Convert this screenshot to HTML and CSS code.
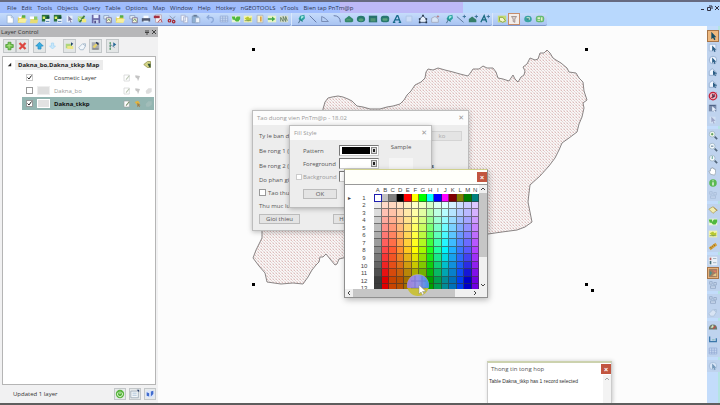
FILE: index.html
```html
<!DOCTYPE html>
<html lang="vi">
<head>
<meta charset="utf-8">
<title>Map workspace</title>
<link rel="stylesheet" href="styles.css">
</head>
<body>
<svg class="defs" aria-hidden="true">
  <symbol id="new" viewBox="0 0 12 12"><path d="M2.500 1.500h5l2.500 2.500v7h-7.500z" fill="#fff" stroke="#9ab4d6"/><path d="M7.500 1.500v3h2.500" fill="none" stroke="#9ab4d6"/></symbol>
  <symbol id="open" viewBox="0 0 12 12"><path d="M1 4h4l1-1.500h4v8H1z" fill="#e5d65c"/><path d="M1 10l2-4h9l-2 4.500z" fill="#f7ef9c"/><path d="M6 1.500h4v3H6z" fill="#55ad4a"/><path d="M2 3h3v2H2z" fill="#fff"/></symbol>
  <symbol id="openw" viewBox="0 0 12 12"><path d="M1 3h5v3H1z" fill="#fff"/><path d="M2 6h9l-1 5H1z" fill="#e8dc72"/><path d="M6 3h4v4H6z" fill="#8fca68"/></symbol>
  <symbol id="dbmap" viewBox="0 0 12 12"><path d="M1 1h9v8H1z" fill="#28713c"/><path d="M2 3h3v3H2z" fill="#d9ea68"/><path d="M5 6h6v5H5z" fill="#dfeaf4"/><path d="M7 3h3v2H7z" fill="#153f42"/><path d="M6 9h4" stroke="#4f7db4"/></symbol>
  <symbol id="arrow" viewBox="0 0 12 12"><path d="M2 2h7v8H2z" fill="#e6effb"/><path d="M4 2l5 5-2.500.2L8 10l-1.200.5-1.200-3L4 9z" fill="#7d779e"/></symbol>
  <symbol id="wand" viewBox="0 0 12 12"><path d="M1 3h8v6H1z" fill="#a9d56a"/><path d="M3 10l6-8" stroke="#437d42" stroke-width="2"/><path d="M6 6h5v4H6z" fill="#f3ea7d"/><path d="M2 4l3 3" stroke="#fff"/></symbol>
  <symbol id="save" viewBox="0 0 12 12"><path d="M1 1h10v10H1z" fill="#6967a6"/><path d="M3 1h6v4H3z" fill="#e8efff"/><path d="M3 7h6v4H3z" fill="#c8d3ed"/><path d="M4 8h2v3H4z" fill="#504d89"/></symbol>
  <symbol id="layers" viewBox="0 0 12 12"><path d="M1 2h6v4H1z" fill="#e9f3f8" stroke="#869abf"/><path d="M4 4.500h6v6H4z" fill="#f5f3d6" stroke="#766c91"/><path d="M5 8l2-2 2 3" fill="none" stroke="#528951"/></symbol>
  <symbol id="print" viewBox="0 0 12 12"><path d="M3 2h6v4H3z" fill="#f8fbff"/><path d="M1 5h10v4H1z" fill="#525a70"/><path d="M3 8h6v2H3z" fill="#dce8f8"/></symbol>
  <symbol id="pdf" viewBox="0 0 12 12"><path d="M3 1h7v9H3z" fill="#f1f1f5" stroke="#b9a5b1"/><path d="M1 2h7v3H1z" fill="#a52f40"/><path d="M6 10l3-4 2 4" fill="none" stroke="#bc3945"/></symbol>
  <symbol id="cut" viewBox="0 0 12 12"><path d="M3 2l6 6M10 3L4 8" stroke="#8593ad"/><circle cx="3" cy="8" r="1.500" fill="none" stroke="#a82831" stroke-width="1.500"/><circle cx="8" cy="9" r="1.500" fill="none" stroke="#a82831" stroke-width="1.500"/></symbol>
  <symbol id="copy" viewBox="0 0 12 12"><path d="M2.500 1.500h5v7h-5zM5.500 3.500h5v7h-5z" fill="#f3f7fd" stroke="#a7b1cf"/></symbol>
  <symbol id="paste" viewBox="0 0 12 12"><path d="M1.500 2.500h7v8h-7z" fill="#8eb0d2" stroke="#8098bc"/><path d="M5.500 4.500h5v6h-5z" fill="#eef5fd" stroke="#96a9c5"/><path d="M3 1h4v2H3z" fill="#667a94"/></symbol>
  <symbol id="undo" viewBox="0 0 12 12"><path d="M3 4h4q3 0 3 3t-3 3M5 1.500L2.500 4 5 6.500" fill="none" stroke="#8ba8d8" stroke-width="1.500"/></symbol>
  <symbol id="grid" viewBox="0 0 12 12"><path d="M1.500 2.500h9v7h-9zM1.500 5h9M1.500 7.500h9M4.500 2.500v7M7.500 2.500v7" fill="#d7e5fa" stroke="#92aad4"/></symbol>
  <symbol id="greenmap" viewBox="0 0 12 12"><path d="M1 2h10v8H1z" fill="#e9f6d6"/><path d="M1 3h4v3l2-3h4v3l-2 3H6L4 7H2z" fill="#4eb83e"/></symbol>
  <symbol id="yellowmap" viewBox="0 0 12 12"><path d="M1 2h10v8H1z" fill="#f3f3b1"/><path d="M2 5l4-2 2 2 2-1v3L6 9z" fill="#b7c832"/><path d="M2 8h8" stroke="#769957"/></symbol>
  <symbol id="chart" viewBox="0 0 12 12"><path d="M2.500 1.500h7v9h-7z" fill="#f6f1cf" stroke="#a6b0bd"/><path d="M6 3h2v6H6z" fill="#dba344"/></symbol>
  <symbol id="gomap" viewBox="0 0 12 12"><path d="M1 2h10v8H1z" fill="#e7f4c6"/><path d="M1 5h5V3l4 3-4 3V7H1z" fill="#43a74c"/></symbol>
  <symbol id="district" viewBox="0 0 12 12"><path d="M1 2h10v8H1z" fill="#d8dfcd"/><path d="M2 9V4l3 5V3l3 6V3l2 5" fill="none" stroke="#5d7a5f"/></symbol>
  <symbol id="pin" viewBox="0 0 12 12"><path d="M3 11l2-4" stroke="#385e77"/><path d="M5 2l5-1 .8 4L7 9 3 6z" fill="#2ca1a0"/><path d="M6 3l3-1v2L6 6z" fill="#a3eee2"/><path d="M4 6l4 3" stroke="#207676"/></symbol>
  <symbol id="line" viewBox="0 0 12 12"><path d="M2 2l8 8" stroke="#586b99"/></symbol>
  <symbol id="polyline" viewBox="0 0 12 12"><path d="M2 9V3l4 2 4 4H2" fill="none" stroke="#6e81aa"/></symbol>
  <symbol id="arc" viewBox="0 0 12 12"><path d="M2 2q8 0 8 8" fill="none" stroke="#586b99"/></symbol>
  <symbol id="poly" viewBox="0 0 12 12"><path d="M1 9V6l5-4 5 4v3l-2 1H2z" fill="#34886b"/><path d="M3 6h5v2H3z" fill="#529977"/></symbol>
  <symbol id="ellipse" viewBox="0 0 12 12"><ellipse cx="6" cy="6" rx="5" ry="4" fill="#27796d"/><ellipse cx="6" cy="7" rx="3" ry="2" fill="#55a079"/></symbol>
  <symbol id="rect" viewBox="0 0 12 12"><path d="M1 2h10v8H1z" fill="#28726c"/><path d="M3 5h6v4H3z" fill="#4f9574"/></symbol>
  <symbol id="rrect" viewBox="0 0 12 12"><rect x="1" y="2" width="10" height="8" rx="3" fill="#28786f"/><rect x="3" y="5" width="6" height="3" rx="1" fill="#5aa57e"/></symbol>
  <symbol id="text" viewBox="0 0 12 12"><path d="M2 10L6 2h1l3 8M4 7h5M1 10h3M8 10h3" fill="none" stroke="#176a8a" stroke-width="1.500"/></symbol>
  <symbol id="frame" viewBox="0 0 12 12"><path d="M2.500 2.500h7v7h-7z" fill="#cbdcf7" stroke="#adc3e5"/></symbol>
  <symbol id="reshape" viewBox="0 0 12 12"><path d="M2 10V6l4-4 4 4v4z" fill="#e5effc" stroke="#31435d"/><path d="M1 5h2v2H1zM5 1h2v2H5zM9 5h2v2H9zM1 9h2v2H1zM9 9h2v2H9z" fill="#233246"/></symbol>
  <symbol id="addnode" viewBox="0 0 12 12"><path d="M2 10V5l4-2 4 3v4z" fill="#d7e4f6" stroke="#a3a9bd"/><path d="M8 3h3M9.500 1.500v3" stroke="#b47c86"/></symbol>
  <symbol id="lineplus" viewBox="0 0 12 12"><path d="M1 3l8 7" stroke="#4d6a8b"/><path d="M8 3h4M10 1v4" stroke="#326b91"/></symbol>
  <symbol id="polyplus" viewBox="0 0 12 12"><path d="M1 10V6l4-3 5 4v3z" fill="#357e69"/><path d="M8 3h4M10 1v4" stroke="#326b91"/></symbol>
  <symbol id="textplus" viewBox="0 0 12 12"><path d="M1 10L5 2l3 8M3 7h5" fill="none" stroke="#176a7e" stroke-width="1.500"/><path d="M8 3h4M10 1v4" stroke="#326b91"/></symbol>
  <symbol id="style" viewBox="0 0 12 12"><path d="M1 2h10v8H1z" fill="#c4dc72"/><path d="M3 4h4l3 4-3 2-4-2z" fill="#f3f5c9" stroke="#809a36"/></symbol>
  <symbol id="funnel" viewBox="0 0 12 12"><path d="M1 2h10v8H1z" fill="#f4eeea"/><path d="M3 3h6L7 6v4L5 9V6z" fill="#d8d0cd" stroke="#9c8c89"/></symbol>
  <symbol id="globe" viewBox="0 0 12 12"><ellipse cx="6" cy="6" rx="4.500" ry="4" fill="#3aa3a1"/><path d="M4 4h4v3H6z" fill="#dcf1d3"/><path d="M5 5h2v2H5z" fill="#246e83"/></symbol>
  <symbol id="tiles" viewBox="0 0 12 12"><rect x="1" y="2" width="10" height="8" rx="3" fill="#65b971"/><path d="M3 4h3v2H3zM7 4h2v4H7zM3 7h3v1H3z" fill="#dff1c3"/></symbol>
  <symbol id="select" viewBox="0 0 12 12"><path d="M4 1v9l2-2 1.500 3 1.500-1-1.500-2.500H10z" fill="#154e67"/></symbol>
  <symbol id="marquee" viewBox="0 0 12 12"><path d="M1.500 1.500h8v8h-8z" fill="#eef5ff" stroke="#9fb6d4"/><path d="M5 3v7l1.500-1.500L8 11l1-1-1-2h2z" fill="#2b5d86"/></symbol>
  <symbol id="radius" viewBox="0 0 12 12"><circle cx="6" cy="6" r="4.500" fill="#eef5ff" stroke="#8ea8cb"/><path d="M5 3v7l1.500-1.500L8 11l1-1-1-2h2z" fill="#2b5d86"/></symbol>
  <symbol id="polysel" viewBox="0 0 12 12"><path d="M1.500 10V5L5 2l5 4v4z" fill="#eef5ff" stroke="#8ea8cb"/><path d="M6 4v6l1.500-1 1 2 1-1-1-2H11z" fill="#2b5d86"/></symbol>
  <symbol id="unselect" viewBox="0 0 12 12"><circle cx="6" cy="6" r="4.500" fill="#f0b1b9" stroke="#c3243c" stroke-width="1.500"/><path d="M5 3v6l4-3z" fill="#3c3554"/><path d="M2 10l8-8" stroke="#c3243c"/></symbol>
  <symbol id="invert" viewBox="0 0 12 12"><path d="M1 2h9v8H1z" fill="#7b8dac"/><path d="M2 3h7" stroke="#475b80"/><path d="M5 4v6l1.500-1 1 2 1-1-1-2H10z" fill="#e9f2ff"/></symbol>
  <symbol id="zoomin" viewBox="0 0 12 12"><circle cx="5" cy="5" r="3.500" fill="#f3f9f0" stroke="#9db4c5"/><path d="M3.500 5h3M5 3.500v3" stroke="#3e8b35"/><path d="M8 8l3 3" stroke="#52677c" stroke-width="2"/></symbol>
  <symbol id="zoomout" viewBox="0 0 12 12"><circle cx="5" cy="5" r="3.500" fill="#f3f9fc" stroke="#9db4c5"/><path d="M3.500 5h3" stroke="#39607d"/><path d="M8 8l3 3" stroke="#52677c" stroke-width="2"/></symbol>
  <symbol id="zoomq" viewBox="0 0 12 12"><circle cx="5" cy="5" r="3.500" fill="#f3f9fc" stroke="#9db4c5"/><path d="M4 4q1-2 2 0L5 5v1" fill="none" stroke="#3e8b75"/><path d="M8 8l3 3" stroke="#52677c" stroke-width="2"/></symbol>
  <symbol id="hand" viewBox="0 0 12 12"><path d="M3 10L1 6l2 0V3l1.500 0V2h1.500v1h1.500v1H9v4l-1 3z" fill="#fff" stroke="#9ca9b7"/></symbol>
  <symbol id="info" viewBox="0 0 12 12"><circle cx="6" cy="6" r="4.500" fill="#59b950"/><path d="M6 3v1M6 5v4" stroke="#fff" stroke-width="1.500"/></symbol>
  <symbol id="label" viewBox="0 0 12 12"><path d="M1 5l5-3 5 4-5 4z" fill="#f2edb0" stroke="#b3a561"/><path d="M7 3l4 4" stroke="#a1773b"/></symbol>
  <symbol id="ruler" viewBox="0 0 12 12"><path d="M1 8l8-6 2 3-8 6z" fill="#d5a23b"/><path d="M3 7l1 2M5 6l1 1M7 4l1 2" stroke="#875f20"/></symbol>
  <symbol id="legend" viewBox="0 0 12 12"><path d="M1 1h10v10H1z" fill="#e9f0f8"/><path d="M2 2h2v3H2z" fill="#b85f58"/><path d="M2 6h2v4H2z" fill="#456e78"/><path d="M6 3h4M6 8h4" stroke="#99a9b4"/></symbol>
  <symbol id="clip" viewBox="0 0 12 12"><path d="M1 1h10v10H1z" fill="#a27e63"/><path d="M2 3l3 3-3 4" fill="#4b8f8b"/><path d="M5 3h5v3z" fill="#e77765"/><path d="M5 9l5-3v4z" fill="#e5ca86"/></symbol>
  <symbol id="ghost" viewBox="0 0 12 12"><path d="M2 2h3v3H2zM7 3h3v3H7zM3 7h6v3H3z" fill="#c6d6ec" stroke="#94a8c6"/></symbol>
  <symbol id="gauge" viewBox="0 0 12 12"><path d="M1 9q0-6 5-6t5 6z" fill="#6c796d"/><path d="M3 7l3-4 1 4z" fill="#d6e6be"/><path d="M6 8l3-3" stroke="#c44940" stroke-width="1.500"/></symbol>
  <symbol id="scale" viewBox="0 0 12 12"><path d="M2 3v6h8V5" fill="none" stroke="#3b77aa" stroke-width="1.500"/><path d="M5 7h3" stroke="#74b5a3"/></symbol>
  <symbol id="plus" viewBox="0 0 12 12"><path d="M4 1h4v3h3v4H8v3H4V8H1V4h3z" fill="#74c34f" stroke="#4c9835"/><path d="M5.500 3v6M3 5.500h6" stroke="#b6e78f"/></symbol>
  <symbol id="cross" viewBox="0 0 12 12"><path d="M2 2l8 8M10 2l-8 8" stroke="#dd4840" stroke-width="3"/></symbol>
  <symbol id="up" viewBox="0 0 12 12"><path d="M6 1l5 5H8v4H4V6H1z" fill="#39aee0" stroke="#278bc4"/></symbol>
  <symbol id="down" viewBox="0 0 12 12"><path d="M6 10L2 6h2.500V2h3v4H10z" fill="#c8e7fb" stroke="#a5d5f4"/></symbol>
  <symbol id="hotlink" viewBox="0 0 12 12"><path d="M1 3h8v6H1z" fill="#afd67c"/><path d="M3 6h8v4H3z" fill="#ece787"/><path d="M8 1l3 2-3 3z" fill="#25466d"/></symbol>
  <symbol id="palette" viewBox="0 0 12 12"><path d="M1 8l5-5 4 3-3 5H3z" fill="#f1f6fb" stroke="#9ab0c6"/><path d="M7 3h3v3" fill="none" stroke="#9ab0c6"/></symbol>
  <symbol id="brush" viewBox="0 0 12 12"><path d="M1 1h10v10H1z" fill="#a9abb0"/><path d="M2 7l4-4 3 1-4 5z" fill="#e6d26a"/><path d="M7 1l3 3" stroke="#263754" stroke-width="2"/><path d="M2 10h8" stroke="#666"/></symbol>
  <symbol id="nodes" viewBox="0 0 12 12"><path d="M3 2v8M3 4l6 4" stroke="#6881a0"/><path d="M2 1h2v2H2zM2 5h2v2H2zM2 9h2v2H2z" fill="#4e9b5e"/><path d="M7 1l4 3-4 3z" fill="#276a97"/></symbol>
  <symbol id="tag" viewBox="0 0 12 12"><path d="M1 6l5-4h4v8H6z" fill="#d6d687" stroke="#8c8d4b"/><path d="M6 5h4v5L8 9z" fill="#33533a"/></symbol>
  <symbol id="edit" viewBox="0 0 12 12"><path d="M1.500 1.500h8v9h-8z" fill="#fff" stroke="#9da2a2"/><path d="M4 8l5-6 1 1-5 6z" fill="#758b64"/></symbol>
  <symbol id="pick" viewBox="0 0 12 12"><path d="M1 3l5-2 3 4-4 3z" fill="#e3b43f"/><path d="M5 4v7l2-2 1 2 1-1-1-2h2z" fill="#9b7d4c"/></symbol>
  <symbol id="gpick" viewBox="0 0 12 12"><path d="M2 2l7 1-3 8-1-4-3-2z" fill="#c4c4c4"/></symbol>
  <symbol id="blob" viewBox="0 0 12 12"><path d="M1 6l4-4h5v5l-4 3H2z" fill="#ddd"/></symbol>
  <symbol id="power" viewBox="0 0 12 12"><circle cx="6" cy="6" r="5" fill="#57b43d"/><path d="M4 4a3 3 0 1 0 4 0M6 3v3" fill="none" stroke="#f3ffe9"/></symbol>
  <symbol id="sheet" viewBox="0 0 12 12"><path d="M1 2.500h9v8H1z" fill="#f4f7fa" stroke="#9aa8b4"/><path d="M3 5h5M3 7.500h5" stroke="#9fbbd1"/><path d="M8 1h3v3z" fill="#273d69"/></symbol>
  <symbol id="help" viewBox="0 0 12 12"><path d="M1 3l5-2 5 2v6l-5 2-5-2z" fill="#dce6fa"/><path d="M2 4l3 1v4L2 8zM7 3l3-1v4L7 9z" fill="#406bce"/></symbol>
</svg>

<header class="top">
  <nav class="menu" aria-label="Menu">
    <a href="#">File</a><a href="#">Edit</a><a href="#">Tools</a><a href="#">Objects</a><a href="#">Query</a><a href="#">Table</a><a href="#">Options</a><a href="#">Map</a><a href="#">Window</a><a href="#">Help</a><a href="#">Hotkey</a><a href="#">nGEOTOOLS</a><a href="#">vTools</a><a href="#">Bien tap PnTm@p</a>
    <span class="wincontrols">
      <button aria-label="Minimize"><svg viewBox="0 0 6 6"><path d="M1 4.500h3" stroke="#334"/></svg></button>
      <button aria-label="Restore"><svg viewBox="0 0 6 6"><path d="M.5 2.500h3v3h-3zM2 1h3v3" fill="none" stroke="#334"/></svg></button>
      <button aria-label="Close"><svg viewBox="0 0 6 6"><path d="M1 1l4 4M5 1L1 5" stroke="#334"/></svg></button>
    </span>
  </nav>
  <div class="toolbars">
    <div class="strip">
      <div class="group"><button aria-label="New"><svg><use href="#new"/></svg></button><button aria-label="Open"><svg><use href="#open"/></svg></button><button aria-label="Open workspace"><svg><use href="#openw"/></svg></button><button aria-label="Open database"><svg><use href="#dbmap"/></svg></button><button aria-label="Open service"><svg><use href="#dbmap"/></svg></button><button aria-label="Pointer"><svg><use href="#arrow"/></svg></button><button aria-label="Wand"><svg><use href="#wand"/></svg></button></div>
      <div class="group"><button aria-label="Save"><svg><use href="#save"/></svg></button><button aria-label="Save layers"><svg><use href="#layers"/></svg></button><button aria-label="Save workspace"><svg><use href="#open"/></svg></button></div>
      <div class="group"><button aria-label="Layout"><svg><use href="#layers"/></svg></button><button aria-label="Print"><svg><use href="#print"/></svg></button><button aria-label="PDF"><svg><use href="#pdf"/></svg></button></div>
      <div class="group"><button aria-label="Cut"><svg><use href="#cut"/></svg></button><button aria-label="Copy"><svg><use href="#copy"/></svg></button><button aria-label="Paste"><svg><use href="#paste"/></svg></button></div>
      <div class="group"><button aria-label="Undo"><svg><use href="#undo"/></svg></button></div>
      <div class="group"><button aria-label="Browser"><svg><use href="#grid"/></svg></button><button aria-label="Map"><svg><use href="#greenmap"/></svg></button><button aria-label="Theme"><svg><use href="#yellowmap"/></svg></button><button aria-label="Graph"><svg><use href="#chart"/></svg></button><button aria-label="Go to map"><svg><use href="#gomap"/></svg></button><button aria-label="Districts"><svg><use href="#district"/></svg></button></div>
    </div>
    <div class="strip">
      <div class="group"><button aria-label="Symbol"><svg><use href="#pin"/></svg></button><button aria-label="Line"><svg><use href="#line"/></svg></button><button aria-label="Polyline"><svg><use href="#polyline"/></svg></button><button aria-label="Arc"><svg><use href="#arc"/></svg></button><button aria-label="Polygon"><svg><use href="#poly"/></svg></button><button aria-label="Ellipse"><svg><use href="#ellipse"/></svg></button><button aria-label="Rectangle"><svg><use href="#rect"/></svg></button><button aria-label="Rounded rectangle"><svg><use href="#rrect"/></svg></button><button aria-label="Text"><svg><use href="#text"/></svg></button><button aria-label="Frame"><svg><use href="#frame"/></svg></button></div>
      <div class="group"><button aria-label="Reshape"><svg><use href="#reshape"/></svg></button><button aria-label="Add node"><svg><use href="#addnode"/></svg></button></div>
      <div class="group"><button aria-label="Symbol style"><svg><use href="#pin"/></svg></button><button aria-label="Line style"><svg><use href="#lineplus"/></svg></button><button aria-label="Region style"><svg><use href="#polyplus"/></svg></button><button aria-label="Text style"><svg><use href="#textplus"/></svg></button></div>
    </div>
    <div class="strip">
      <div class="group"><button aria-label="Style"><svg><use href="#style"/></svg></button><button class="on" aria-label="Filter"><svg><use href="#funnel"/></svg></button></div>
      <div class="group"><button aria-label="Globe"><svg><use href="#globe"/></svg></button><button aria-label="Tiles"><svg><use href="#tiles"/></svg></button></div>
    </div>
  </div>
</header>

<main class="work">
  <aside class="panel">
    <div class="panelhead"><h2>Layer Control</h2><svg viewBox="0 0 12 6"><path d="M2 1v3M4 1v3M1 3.500h4M3 4v2" stroke="#444" fill="none"/><path d="M8 1l4 4M12 1L8 5" stroke="#444"/></svg></div>
    <div class="paneltools">
      <div class="group"><button aria-label="Add layer"><svg><use href="#plus"/></svg></button><button aria-label="Remove layer"><svg><use href="#cross"/></svg></button></div>
      <div class="group"><button aria-label="Move up"><svg><use href="#up"/></svg></button><button class="flat" aria-label="Move down"><svg><use href="#down"/></svg></button></div>
      <div class="group"><button aria-label="Hotlink"><svg><use href="#hotlink"/></svg></button><button class="flat" aria-label="Palette"><svg><use href="#palette"/></svg></button><button aria-label="Style override"><svg><use href="#brush"/></svg></button></div>
      <div class="group"><button aria-label="Layer properties"><svg><use href="#nodes"/></svg></button></div>
    </div>
    <div class="tree">
      <div class="maprow"><svg class="twist" viewBox="0 0 6 6"><path d="M5 1v4H1z" fill="#222"/></svg><strong>Dakna_bo,Dakna_tkkp Map</strong><svg class="ic"><use href="#tag"/></svg></div>
      <div class="row"><input type="checkbox" id="l1" checked><span class="swatch none"></span><label for="l1">Cosmetic Layer</label><svg class="ic dim"><use href="#edit"/></svg><svg class="ic"><use href="#gpick"/></svg><span class="ic"></span></div>
      <div class="row off"><input type="checkbox" id="l2"><span class="swatch"></span><label for="l2">Dakna_bo</label><svg class="ic dim"><use href="#edit"/></svg><svg class="ic"><use href="#gpick"/></svg><svg class="ic"><use href="#blob"/></svg></div>
      <div class="row sel"><input type="checkbox" id="l3" checked><span class="swatch"></span><label for="l3">Dakna_tkkp</label><svg class="ic"><use href="#edit"/></svg><svg class="ic"><use href="#pick"/></svg><svg class="ic faint"><use href="#blob"/></svg></div>
    </div>
    <div class="status"><span>Updated 1 layer</span><button aria-label="Auto refresh"><svg><use href="#power"/></svg></button><button aria-label="Options"><svg><use href="#sheet"/></svg></button><button aria-label="Help"><svg><use href="#help"/></svg></button></div>
  </aside>

  <section class="canvas">
    <svg class="map" viewBox="158 26 549 377" role="img" aria-label="Map">
      <defs><pattern id="hatch" width="3" height="3" patternUnits="userSpaceOnUse"><path d="M0 0h3v3H0z" fill="#faf7f6"/><path d="M0 0h1v1H0z" fill="#dcbcba"/><path d="M1 1h1v1H1z" fill="#e2d5d5"/><path d="M2 2h1v1H2z" fill="#e6dada"/><path d="M2 0h1v1H2zM0 2h1v1H0z" fill="#f2e8e8"/></pattern></defs>
      <path d="M323 109L325 102 328 98 332 97 338 96 343 97 348 99 352 101 357 106 363 107 370 109 380 109 387 107 393 106 400 104 404 100 407 95 411 91 415 85 421 82 425 78 426 72 428 69 433 70 438 68 445 70 453 72 460 74 468 76 471 72 473 69 479 69 483 66 487 68 493 68 496 72 498 78 503 79 509 81 513 75 515 79 518 82 521 77 524 75 525 71 523 67 527 64 530 58 535 60 538 59 540 53 544 53 547 50 550 53 553 58 556 60 561 63 567 68 569 72 576 73 579 78 583 82 584 91 587 100 583 103 584 108 582 117 579 124 577 132 569 138 562 143 559 150 555 158 549 166 540 176 530 185 529 193 528 202 530 212 532 222 525 227 517 230 502 232 488 234 440 240 380 250 350 256 343 258 339 259 337 264 335 265 330 259 326 254 323 257 320 257 319 262 316 265 312 270 308 277 303 284 293 283 281 284 267 282 265 273 259 266 253 258 256 250 262 238 262 230 280 180 323 140z" fill="url(#hatch)" stroke="#8a8585"/>
      <path d="M252 48h3v3h-3zM585 48h3v3h-3zM252 283h3v3h-3zM585 283h3v3h-3zM591 289h3v3h-3z" fill="#000"/>
    </svg>

    <form class="win border-dialog">
      <div class="title"><span>Tao duong vien PnTm@p - 18.02</span><button type="button" aria-label="Close">✕</button></div>
      <div class="fields">
        <div class="line tall"><span>Ty le ban do:</span><button type="button" class="btn scalebtn">ko</button></div>
        <div class="line tall">Be rong 1 (mm)</div>
        <div class="line tall split"><span>Be rong 2 (mm)</span><b>s</b></div>
        <div class="line">Do phan giai</div>
        <label class="line"><input type="checkbox">Tao thu muc</label>
        <div class="line">Thu muc luu tru</div>
        <div class="line"><button type="button" class="btn wide">Gioi thieu</button><button type="button" class="btn narrow">H</button></div>
      </div>
    </form>

    <form class="win fill-dialog">
      <div class="title"><span>Fill Style</span><button type="button" aria-label="Close">✕</button></div>
      <div class="fillbody">
        <div class="settings">
          <span>Pattern</span><button type="button" class="combo" aria-label="Pattern"><i class="black"></i><i class="drop"></i></button>
          <span>Foreground</span><button type="button" class="combo" aria-label="Foreground"><i></i><i class="drop"></i></button>
          <label class="bg"><input type="checkbox">Background</label><button type="button" class="combo" aria-label="Background"><i></i><i class="drop"></i></button>
          <button type="button" class="btn ok">OK</button>
        </div>
        <div class="sample">Sample<i></i></div>
      </div>
    </form>

    <div class="picker">
      <div class="pickhead"><button class="red" aria-label="Close">×</button></div>
      <div class="pickbody">
        <div class="view"><table><thead><tr><th class="mark"></th><th class="num"></th></tr></thead><tbody></tbody></table></div>
        <div class="vbar"><svg viewBox="0 0 8 8"><path d="M2 5l2-2 2 2" fill="none" stroke="#444"/></svg><i></i><svg viewBox="0 0 8 8"><path d="M2 3l2 2 2-2" fill="none" stroke="#444"/></svg></div>
        <div class="hbar"><svg viewBox="0 0 8 8"><path d="M5 2L3 4l2 2" fill="none" stroke="#444"/></svg><i></i><svg viewBox="0 0 8 8"><path d="M3 2l2 2-2 2" fill="none" stroke="#444"/></svg></div>
        <div class="corner"></div>
      </div>
      <svg class="pointer" viewBox="0 0 24 24"><defs><linearGradient id="glow"><stop offset="0" stop-color="#9b78f0"/><stop offset=".5" stop-color="#9090ff"/><stop offset="1" stop-color="#2f8cff"/></linearGradient></defs><circle cx="12" cy="12" r="11" fill="#c9c02e" opacity=".9"/><path d="M1.300 15A11 11 0 1 1 22.700 15z" fill="url(#glow)" opacity=".88"/><path d="M5 8h15M5 15h15M9 3v12M16 3v12" stroke="#5555b8" opacity=".4"/><path d="M13 12v9l2-2 1.500 3 1.500-1-1.500-2.500H20z" fill="#fff" stroke="#888" stroke-width=".5"/></svg>
    </div>

    <div class="message">
      <div class="msghead"><span>Thong tin tong hop</span><button class="red" aria-label="Close">×</button></div>
      <div class="msgbody"><p>Table Dakna_tkkp has 1 record selected</p><div class="msgbar"><svg viewBox="0 0 8 8"><path d="M2 5l2-2 2 2" fill="none" stroke="#aaa"/></svg></div></div>
    </div>
  </section>

  <div class="side">
    <div class="group"><button class="on" aria-label="Select"><svg><use href="#select"/></svg></button><button aria-label="Marquee select"><svg><use href="#marquee"/></svg></button><button aria-label="Radius select"><svg><use href="#radius"/></svg></button><button aria-label="Polygon select"><svg><use href="#polysel"/></svg></button><button aria-label="Boundary select"><svg><use href="#polysel"/></svg></button><button aria-label="Unselect all"><svg><use href="#unselect"/></svg></button><button aria-label="Invert selection"><svg><use href="#invert"/></svg></button><button class="dim" aria-label="Graph select"><svg><use href="#arrow"/></svg></button></div>
    <div class="group"><button aria-label="Zoom in"><svg><use href="#zoomin"/></svg></button><button aria-label="Zoom out"><svg><use href="#zoomout"/></svg></button><button aria-label="Change view"><svg><use href="#zoomq"/></svg></button><button aria-label="Pan"><svg><use href="#hand"/></svg></button><button aria-label="Info"><svg><use href="#info"/></svg></button><button class="dim" aria-label="Hotlink"><svg><use href="#ghost"/></svg></button></div>
    <div class="group"><button aria-label="Label"><svg><use href="#label"/></svg></button><button aria-label="Drag map"><svg><use href="#greenmap"/></svg></button><button aria-label="Layer control"><svg><use href="#yellowmap"/></svg></button><button aria-label="Ruler"><svg><use href="#ruler"/></svg></button></div>
    <div class="group"><button aria-label="Legend"><svg><use href="#legend"/></svg></button><button class="on" aria-label="Clip region"><svg><use href="#clip"/></svg></button><button aria-label="Set target"><svg><use href="#ghost"/></svg></button></div>
    <div class="group"><button aria-label="Assign"><svg><use href="#ghost"/></svg></button><button class="dim" aria-label="Clear"><svg><use href="#palette"/></svg></button></div>
    <div class="group"><button aria-label="Statistics"><svg><use href="#gauge"/></svg></button><button aria-label="Scale bar"><svg><use href="#scale"/></svg></button><button aria-label="Table"><svg><use href="#grid"/></svg></button></div>
    <div class="group"><button class="dim" aria-label="Radius"><svg><use href="#radius"/></svg></button></div>
  </div>
</main>
<script src="palette.js"></script>
</body>
</html>
```
FILE: styles.css
```css
* { box-sizing: border-box; }
body {
  margin: 0;
  height: 100vh;
  display: flex;
  flex-direction: column;
  overflow: hidden;
  border-top: 2px solid #666a80;
  border-bottom: 2px solid #5e5e5e;
  background: #fcfcfc;
  color: #333;
  font: 6px/8px "Open Sans", "Noto Sans", sans-serif;
}
button { margin: 0; padding: 0; border: 0; background: none; font: inherit; color: inherit; }
input { margin: 0; }
.defs { position: absolute; width: 0; height: 0; }

/* Menu and toolbars */
.top { flex: none; background: #b8d8fd; }
.menu {
  display: flex;
  align-items: center;
  gap: 5px;
  height: 11px;
  padding-left: 7px;
  background: linear-gradient(90deg, #a0bdfd 0 340px, #bdb9f7 340px 463px, #b8d8fd 463px);
}
.menu a { color: #2d3450; text-decoration: none; white-space: nowrap; }
.wincontrols { display: flex; gap: 1px; margin-left: auto; }
.wincontrols button { display: flex; }
.wincontrols svg { width: 6px; height: 6px; }
.toolbars { display: flex; height: 13px; }
.strip {
  display: flex;
  gap: 2px;
  padding: 0 1px 0 3px;
  border-radius: 0 2px 2px 0;
  border-bottom: 1px solid #7f98cc;
  background: linear-gradient(#c6dcfb, #a9c4f2);
}
.strip + .strip { border-left: 1px solid #d9e7fb; }
.strip:first-child { padding-left: 4px; }
.group { display: flex; }
.strip button, .side button { display: flex; width: 12px; height: 12px; padding: 1px; }
.strip svg, .side svg { width: 10px; height: 10px; }
.strip .on { background: #f3eeeb; outline: 1px solid #c58c6c; outline-offset: -1px; }

.work { flex: 1; display: flex; min-height: 0; }

/* Layer panel */
.panel { flex: none; width: 158px; display: flex; flex-direction: column; background: #f1f1f2; }
.panelhead {
  display: flex;
  align-items: center;
  justify-content: space-between;
  height: 10px;
  margin-top: 1px;
  padding: 0 2px 0 1px;
  background: #b7b7b9;
}
.panelhead h2 { margin: 0; font-size: 6px; font-weight: 400; color: #333; }
.panelhead svg { width: 12px; height: 6px; }
.paneltools { display: flex; gap: 4px; padding: 2px 3px 3px; }
.paneltools button { display: flex; width: 13px; height: 14px; padding: 1px; border: 1px solid #c3c7c9; background: #e3e6e6; }
.paneltools .flat { border-color: transparent; background: none; }
.paneltools svg, .status svg { width: 10px; height: 10px; }
.tree {
  flex: 1;
  margin: 0 2px;
  padding: 1px;
  border: 1px solid #b5b5b5;
  background: #fff;
}
.maprow { display: flex; align-items: center; gap: 3px; height: 13px; padding: 0 2px 0 3px; }
.maprow strong { padding: 1px 4px 1px 3px; background: #ececec; color: #222; }
.twist { width: 5px; height: 5px; }
.ic { flex: none; width: 8px; height: 8px; }
.maprow .ic { margin-left: auto; width: 9px; height: 9px; }
.row { display: flex; align-items: center; gap: 4px; height: 13px; margin-left: 18px; padding-left: 4px; }
.row label { flex: 1; }
.row .ic { margin-right: -1px; }
.row .ic:last-child { margin-right: 1px; }
.dim { opacity: .5; }
.faint { opacity: .2; }
.off label { color: #999; }
.sel { background: #93b5b1; color: #111; font-weight: 700; }
.swatch { flex: none; width: 13px; height: 9px; border: 1px solid #eee; background: #dedede; }
.sel .swatch { border-color: #fff; background: #e2e2e2; }
.swatch.none { visibility: hidden; }
input[type="checkbox"] {
  flex: none;
  appearance: none;
  width: 7px;
  height: 7px;
  border: 1px solid #999;
  background: #fff;
}
.row input:checked {
  background: #fff url("data:image/svg+xml,%3Csvg xmlns='http://www.w3.org/2000/svg' viewBox='0 0 5 5'%3E%3Cpath d='M.5 2.500L2 4l2.500-3.500' fill='none' stroke='%23222'/%3E%3C/svg%3E");
}
.row:not(.sel) input:checked { border-color: #ccc; }
.status { display: flex; align-items: center; gap: 3px; height: 18px; padding: 0 2px 0 13px; }
.status span { flex: 1; }
.status button { display: flex; width: 12px; height: 12px; border: 1px solid #c3c7c9; background: #e6e9ea; }

/* Map canvas */
.canvas { position: relative; flex: 1; min-width: 0; overflow: hidden; background: #fcfcfc; }
.map { position: absolute; left: 0; top: 0; width: 549px; height: 377px; }
.win {
  position: absolute;
  border: 1px solid #bdbdbd;
  background: #ededed;
  box-shadow: 0 1px 5px #0004;
  color: #555;
}
.title { display: flex; align-items: center; justify-content: space-between; height: 14px; padding: 0 4px; background: #fcfcfc; color: #999; }
.title button { font: 7px/8px "DejaVu Sans", sans-serif; }
.border-dialog { left: 94px; top: 84px; width: 217px; height: 121px; }
.fields { padding: 3px 6px; }
.line { display: flex; align-items: center; gap: 2px; height: 13px; }
.line.tall { height: 15px; }
.line.split b { margin-left: auto; margin-right: 28px; }
.btn { height: 10px; border: 1px solid #bcbcbc; background: #e4e4e4; line-height: 8px; }
.scalebtn { width: 40px; margin-left: auto; color: #aaa; border-color: #d4d4d4; }
.wide { width: 41px; }
.narrow { width: 17px; margin-left: 31px; }
.fill-dialog { left: 131px; top: 99px; width: 143px; height: 83px; }
.fillbody { display: flex; justify-content: space-between; padding: 5px 18px 0 13px; }
.settings { display: grid; grid-template-columns: 34px 40px; grid-auto-rows: 11px; gap: 2px; align-items: center; }
.bg { display: flex; align-items: center; gap: 1px; margin-left: -7px; color: #999; }
.bg input { border-color: #ccc; width: 6px; height: 6px; }
.combo { display: flex; height: 11px; padding: 1px; border: 1px solid #777; border-right-color: #ccc; border-bottom-color: #ccc; background: #fff; }
.combo i { flex: 1; height: 7px; }
.combo .black { margin: 0 1px; background: #000; }
.combo .drop { flex: none; width: 6px; border: 1px solid #888; background: #ddd linear-gradient(#222, #222) center / 2px 3px no-repeat; }
.ok { margin-top: 8px; }
.sample { text-align: center; line-height: 5px; }
.sample i { display: block; width: 24px; height: 12px; margin-top: 8px; background: #f5f5f5; }

/* Colour picker */
.picker {
  position: absolute;
  left: 186px;
  top: 143px;
  width: 144px;
  border: 1px solid #8f8f8f;
  border-top-color: #cfd08e;
  background: #fff;
  box-shadow: 1px 2px 6px #0004;
}
.pickhead { display: flex; justify-content: flex-end; align-items: center; height: 14px; background: #fffffa; }
.red { width: 10px; height: 10px; background: #c2553f; color: #fff; font: 700 7px/9px "Liberation Sans", sans-serif; }
.pickbody { display: grid; grid-template: 104px 8px / 1fr 8px; border-top: 1px solid #999; }
.view { overflow: hidden; }
.view table { width: 100%; height: 107px; border-collapse: separate; border-spacing: 0; table-layout: fixed; color: #444; font: 6px/6px "Liberation Sans", sans-serif; }
.view th, .view td { padding: 0; font-weight: 400; text-align: center; }
.view thead th { height: 9px; }
.mark { width: 9px; }
.num { width: 20px; }
.view td { border-right: 1px solid #3339; border-bottom: 1px solid #3339; }
.view td.current { border: 1px solid #1d1db0; }
.vbar { display: flex; flex-direction: column; background: #f0f0f0; }
.vbar i { height: 64px; background: #c6c6c6; }
.vbar svg { width: 8px; height: 8px; }
.vbar svg:last-child { margin-top: auto; }
.hbar { display: flex; background: #f0f0f0; }
.hbar i { width: 102px; background: #c6c6c6; }
.hbar svg { width: 8px; height: 8px; }
.hbar svg:last-child { margin-left: auto; }
.corner { background: #f0f0f0; }
.pointer { position: absolute; left: 61px; top: 103px; width: 24px; height: 24px; }

/* Message window */
.message {
  position: absolute;
  left: 329px;
  bottom: 0;
  width: 125px;
  height: 42px;
  border: 1px solid #ccc;
  border-top: 2px solid #ccd2ae;
  border-bottom: 0;
  background: #fff;
  box-shadow: 1px 0 4px #0003;
}
.msghead { display: flex; align-items: center; justify-content: space-between; height: 12px; padding-left: 3px; color: #555; }
.msgbody { display: flex; justify-content: space-between; height: 28px; padding-left: 1px; font: 5px/8px "Liberation Sans", sans-serif; }
.msgbody p { margin: 2px 0; white-space: nowrap; }
.msgbar { width: 8px; background: #f3f3f3; }
.msgbar svg { width: 8px; height: 8px; }

/* Tool column */
.side { flex: none; width: 13px; display: flex; flex-direction: column; gap: 3px; padding-top: 4px; background: linear-gradient(90deg, #c3dcfb 0 11px, #b4e4e2 11px); }
.side .group { flex-direction: column; background: #bfd3ee; }
.side .on { background: #eeb97f; outline: 1px solid #a67549; outline-offset: -1px; }
```
FILE: palette.js
```js
// Each column after the first row runs through three tones: light, full and dark.
const top1 = ['#fff', '#c0c0c0', '#808080', '#000', '#f00', '#ff0', '#0f0', '#0ff', '#00f', '#f0f', '#800000', '#808000', '#008000', '#008080'];
const tones = [
  ['ececec', '8c8c8c', '3c3c3c'], ['ffd9c8', 'ff4848', 'e00000'], ['ffd8c0', 'ff5a30', 'c84400'],
  ['ffe2c4', 'ff9030', 'b85000'], ['fff0c4', 'ffc820', 'a07000'], ['ffffc8', 'ffff00', '909000'],
  ['f0ffc4', 'a4f800', '609800'], ['d4ffc8', '20ff20', '00a000'], ['dcfff0', '20ffa0', '00a050'],
  ['dcffff', '00f4ff', '008c98'], ['d4f0ff', '20b0ff', '0070b8'], ['ccdcff', '3878ff', '0040f0'],
  ['ccccff', '5858ff', '0000c8'], ['dcc8ff', 'b040ff', '7000e0']
];
const rgb = hex => [0, 2, 4].map(i => parseInt(hex.slice(i, i + 2), 16));
const mix = (a, b, t) => 'rgb(' + rgb(a).map((v, i) => Math.round(v + (rgb(b)[i] - v) * t)) + ')';
const head = document.querySelector('.view thead tr');
const body = document.querySelector('.view tbody');

for (let c = 0; c < 14; c++) {
  const th = document.createElement('th');
  th.textContent = String.fromCharCode(65 + c);
  head.append(th);
}
for (let r = 1; r <= 13; r++) {
  const tr = body.insertRow();
  const mark = document.createElement('th');
  const num = document.createElement('th');
  mark.textContent = r === 1 ? '▸' : '';
  num.textContent = r;
  tr.append(mark, num);
  tones.forEach(([light, full, dark], c) => {
    const td = tr.insertCell();
    td.style.backgroundColor = r === 1 ? top1[c]
      : r <= 8 ? mix(light, full, (r - 2) / 6)
      : mix(full, dark, Math.min(1, (r - 8) / 4));
    if (r === 1 && c === 0) td.className = 'current';
  });
}
```
